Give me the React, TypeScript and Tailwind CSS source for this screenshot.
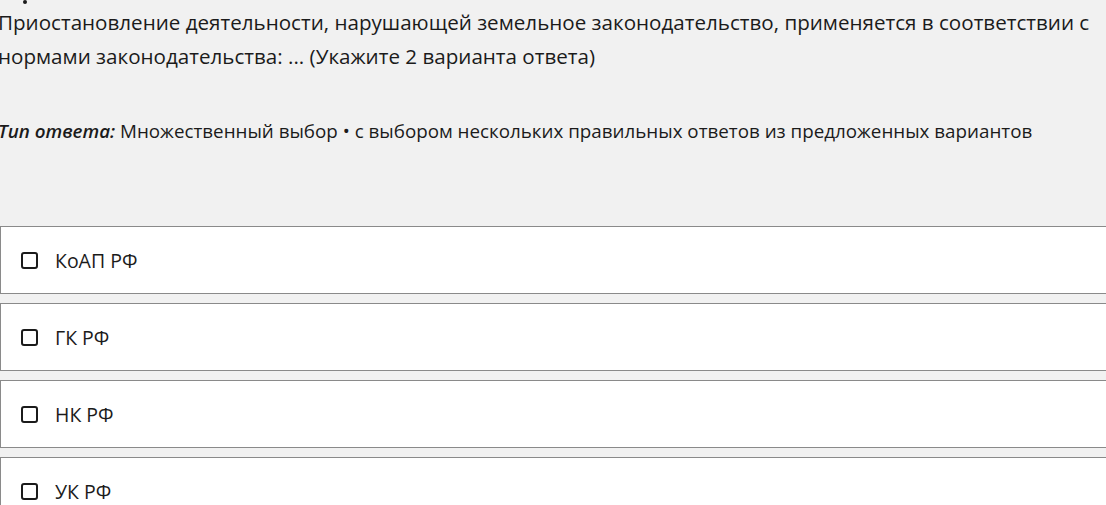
import React from 'react';

const options = ['КоАП РФ', 'ГК РФ', 'НК РФ', 'УК РФ'];

const CheckBox = () => (
  <span className="inline-block w-[17px] h-[17px] shrink-0 rounded-[3px] border-2 border-[#1b1b1b] bg-white" />
);

const App = () => {
  return (
    <div
      className="w-[1106px] h-[505px] overflow-hidden bg-[#f1f1f1] text-[#1b1b1b]"
      style={{ fontFamily: '"Open Sans", "Noto Sans", sans-serif' }}
    >
      <div className="h-[5px] pl-[23px]">
        <span className="block w-[4px] h-[4px] rounded-full bg-[#1b1b1b]" />
      </div>
      <p className="-ml-[2px] text-[20.6px] leading-[34px] whitespace-nowrap">
        Приостановление деятельности, нарушающей земельное законодательство, применяется в соответствии с
        <br />
        нормами законодательства: ... (Укажите 2 варианта ответа)
      </p>
      <p className="mt-[46px] -ml-[2px] text-[18.8px] leading-[24px] whitespace-nowrap">
        <em className="font-semibold">Тип ответа:</em> Множественный выбор • с выбором нескольких правильных
        ответов из предложенных вариантов
      </p>
      <div className="mt-[83px] flex flex-col gap-[9px] w-[1120px]">
        {options.map((o) => (
          <label
            key={o}
            className="flex items-center gap-[17px] h-[68px] pl-[20px] border border-[#8a8a8a] bg-white text-[19.5px]"
          >
            <CheckBox />
            <span className="pt-[2px]">{o}</span>
          </label>
        ))}
      </div>
    </div>
  );
};

export default App;
